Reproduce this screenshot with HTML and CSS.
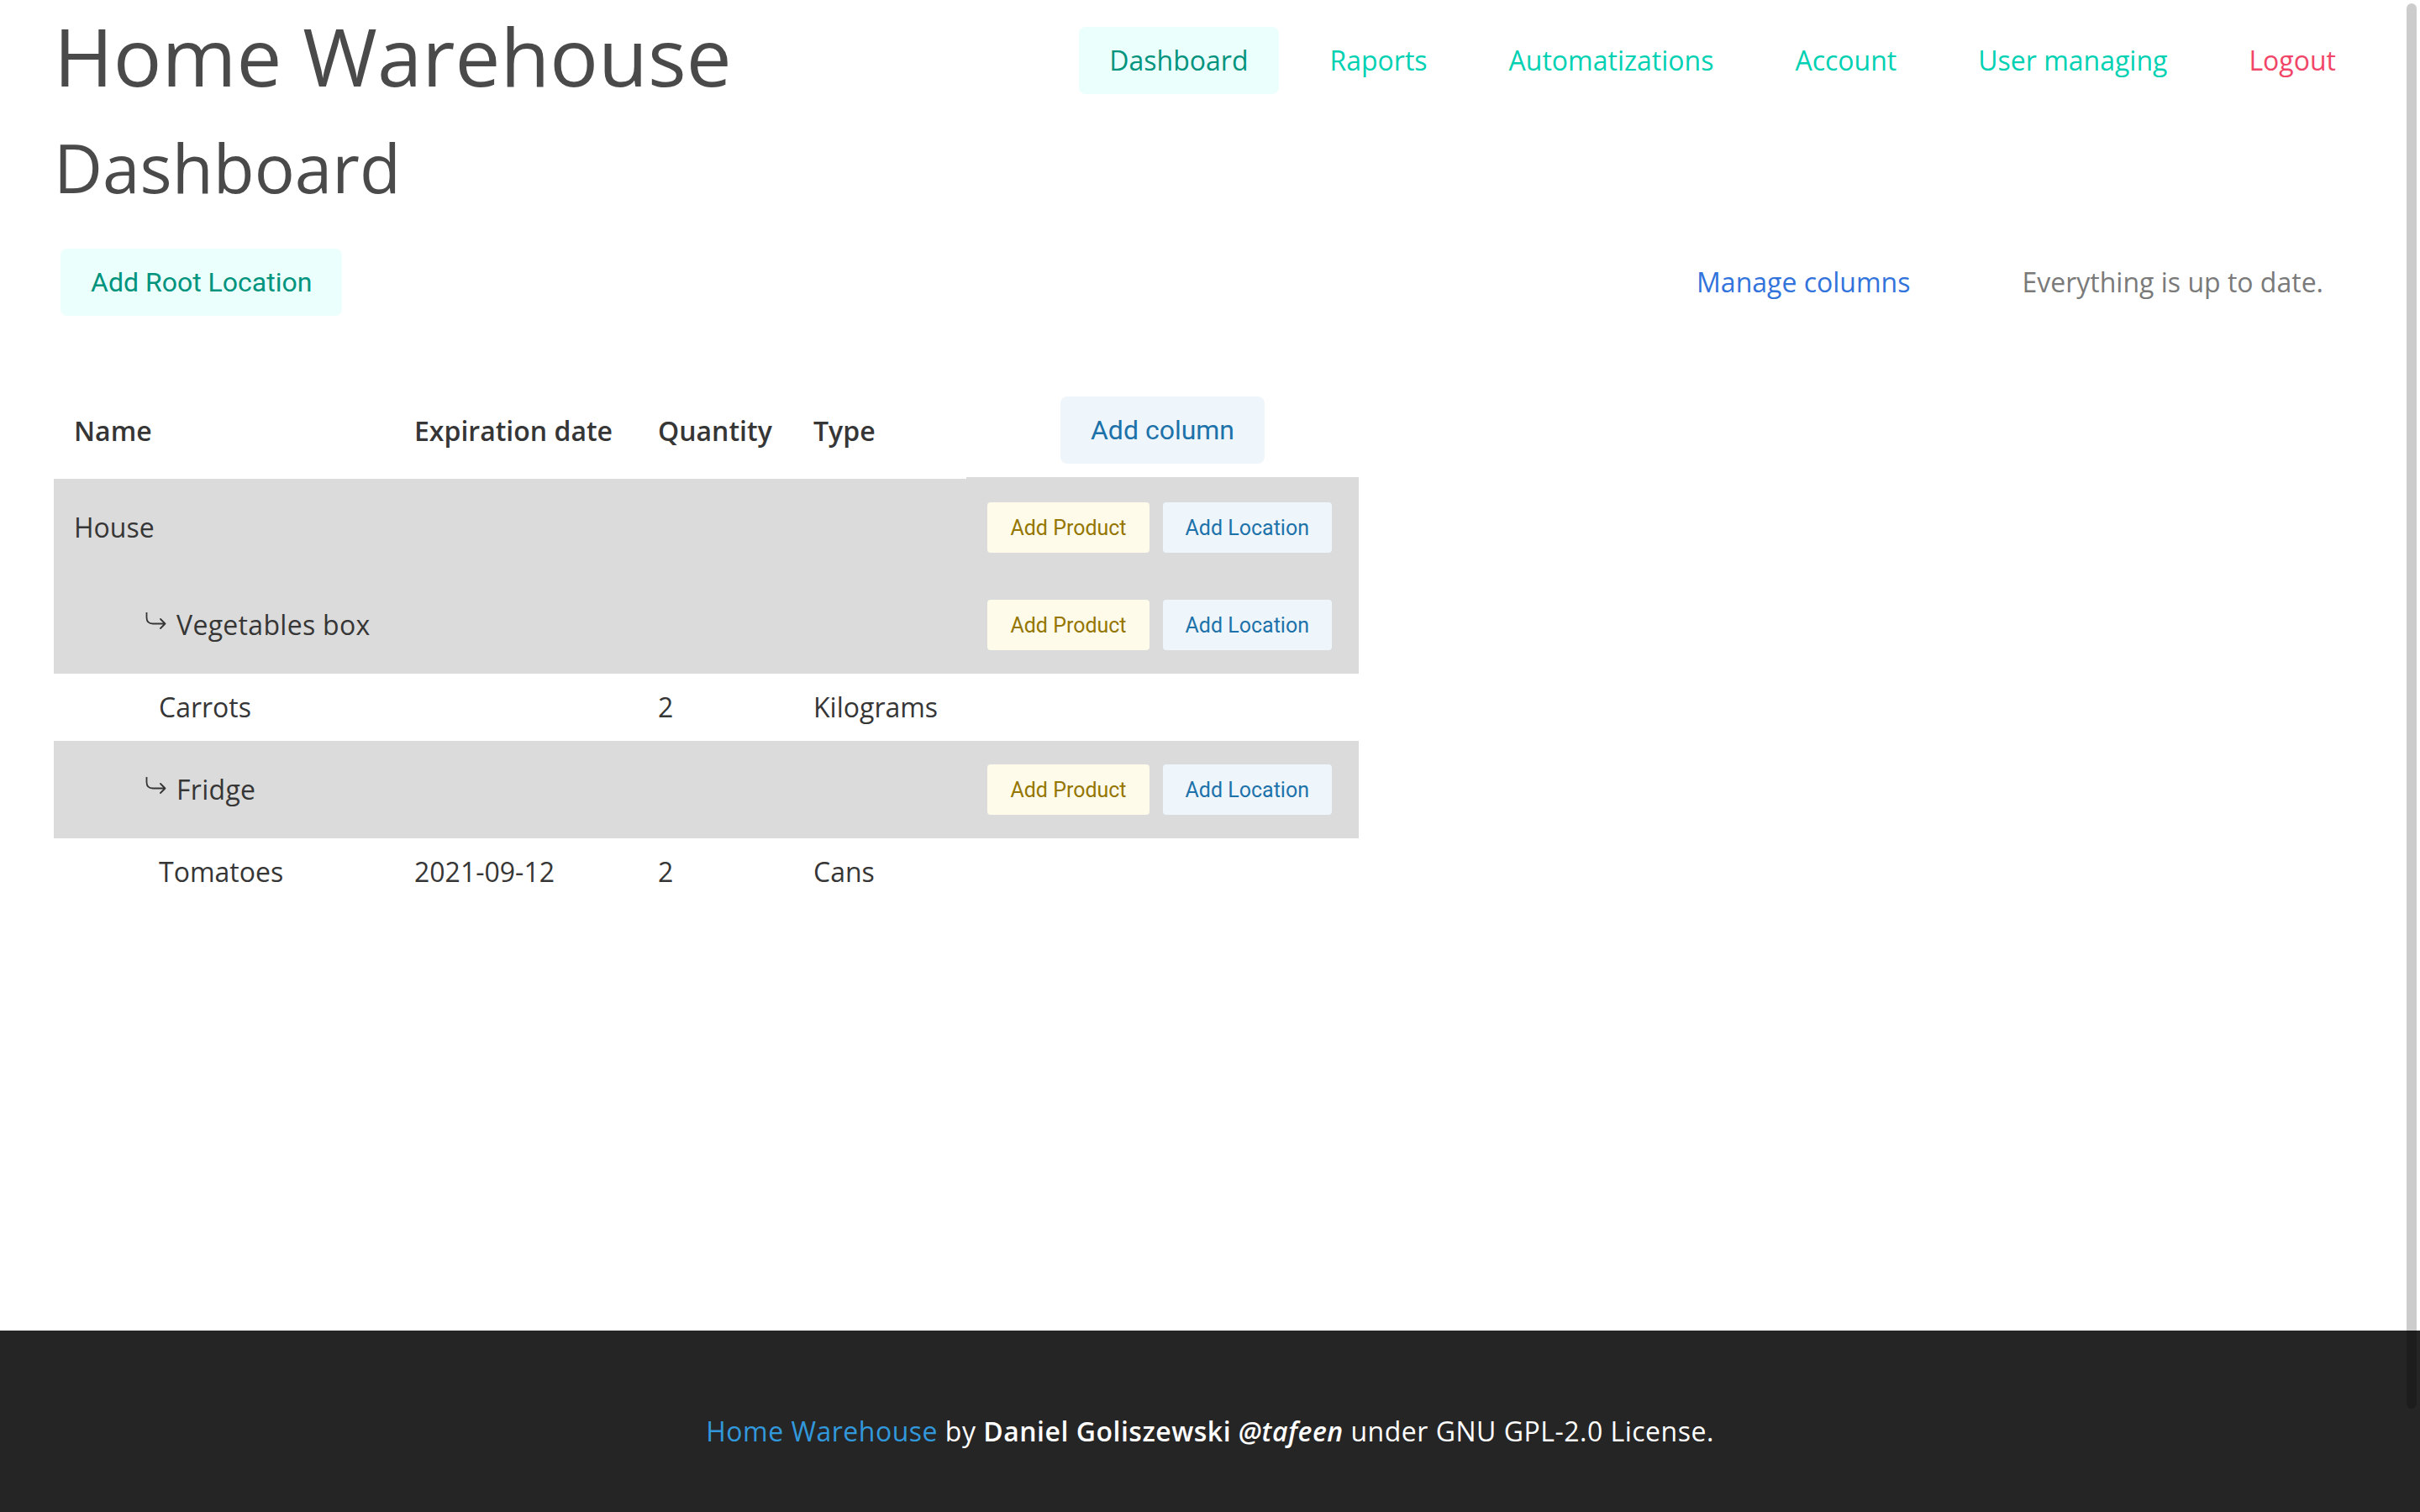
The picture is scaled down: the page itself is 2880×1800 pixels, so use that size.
FILE: index.html
```html
<!DOCTYPE html>
<html lang="en">
<head>
<meta charset="utf-8">
<title>Home Warehouse - Dashboard</title>
<link rel="stylesheet" href="styles.css">
</head>
<body>
<div class="page">
  <main class="container">
    <header class="topbar">
      <h1 class="site-title">Home Warehouse</h1>
      <nav class="nav">
        <a class="nav-item is-active" href="#">Dashboard</a>
        <a class="nav-item" href="#">Raports</a>
        <a class="nav-item" href="#">Automatizations</a>
        <a class="nav-item" href="#">Account</a>
        <a class="nav-item" href="#">User managing</a>
        <a class="nav-item is-danger" href="#">Logout</a>
      </nav>
    </header>

    <h2 class="page-title">Dashboard</h2>

    <div class="toolbar">
      <button class="btn btn-primary-light">Add Root Location</button>
      <div class="toolbar-right">
        <a class="manage-link" href="#">Manage columns</a>
        <span class="status">Everything is up to date.</span>
      </div>
    </div>

    <table class="tree-table">
      <colgroup>
        <col class="col-name">
        <col class="col-exp">
        <col class="col-qty">
        <col class="col-type">
        <col class="col-actions">
      </colgroup>
      <thead>
        <tr class="head-row">
          <th>Name</th>
          <th>Expiration date</th>
          <th>Quantity</th>
          <th>Type</th>
          <th class="th-actions"><button class="btn btn-info-light">Add column</button></th>
        </tr>
      </thead>
      <tbody>
        <tr class="loc-row">
          <td class="name-cell">House</td>
          <td></td>
          <td></td>
          <td></td>
          <td class="actions-cell">
            <div class="actions">
              <button class="btn-small btn-warning-light">Add Product</button>
              <button class="btn-small btn-info-light">Add Location</button>
            </div>
          </td>
        </tr>
        <tr class="loc-row">
          <td class="name-cell level-1">
            <div class="name-wrap">
              <svg class="branch" width="25" height="20" viewBox="0 0 25 20"><path d="M1.5 0.5 V6 Q1.5 13.5 9 13.5 H23.5 M18 8 L23.5 13.5 L18 19" fill="none" stroke="#363636" stroke-width="1.8" stroke-linecap="round" stroke-linejoin="round"/></svg>
              <span>Vegetables box</span>
            </div>
          </td>
          <td></td>
          <td></td>
          <td></td>
          <td class="actions-cell">
            <div class="actions">
              <button class="btn-small btn-warning-light">Add Product</button>
              <button class="btn-small btn-info-light">Add Location</button>
            </div>
          </td>
        </tr>
        <tr class="item-row">
          <td class="name-cell level-2">Carrots</td>
          <td></td>
          <td>2</td>
          <td>Kilograms</td>
          <td></td>
        </tr>
        <tr class="loc-row">
          <td class="name-cell level-1">
            <div class="name-wrap">
              <svg class="branch" width="25" height="20" viewBox="0 0 25 20"><path d="M1.5 0.5 V6 Q1.5 13.5 9 13.5 H23.5 M18 8 L23.5 13.5 L18 19" fill="none" stroke="#363636" stroke-width="1.8" stroke-linecap="round" stroke-linejoin="round"/></svg>
              <span>Fridge</span>
            </div>
          </td>
          <td></td>
          <td></td>
          <td></td>
          <td class="actions-cell">
            <div class="actions">
              <button class="btn-small btn-warning-light">Add Product</button>
              <button class="btn-small btn-info-light">Add Location</button>
            </div>
          </td>
        </tr>
        <tr class="item-row">
          <td class="name-cell level-2">Tomatoes</td>
          <td>2021-09-12</td>
          <td>2</td>
          <td>Cans</td>
          <td></td>
        </tr>
      </tbody>
    </table>
  </main>

  <footer class="footer">
    <p class="footer-text"><a class="footer-link" href="#">Home Warehouse</a> by <strong>Daniel Goliszewski</strong> <em class="handle">@tafeen</em> under GNU GPL-2.0 License.</p>
  </footer>
</div>
<div class="scroll-thumb"></div>
</body>
</html>
```

FILE: styles.css
```css
html, body {
  margin: 0;
  padding: 0;
  height: 1800px;
  overflow: hidden;
  background: #ffffff;
}

body {
  font-family: "Open Sans", "Noto Sans", sans-serif;
  font-size: 32px;
  line-height: 48px;
  color: #4a4a4a;
}

.page {
  display: flex;
  flex-direction: column;
  height: 1800px;
}

.container {
  flex: 1;
  padding: 0 64px;
}

/* ---------- header ---------- */
.topbar {
  display: flex;
  justify-content: space-between;
  align-items: flex-start;
  padding-top: 12px;
}

.site-title {
  margin: 0;
  font-size: 96px;
  line-height: 108px;
  font-weight: 400;
  color: #4a4a4a;
}

.nav {
  display: flex;
  gap: 25px;
  margin-top: 20px;
}

.nav-item {
  display: flex;
  align-items: center;
  height: 80px;
  padding: 0 36px;
  border-radius: 8px;
  color: #00d1b2;
  text-decoration: none;
  font-size: 32px;
}

.nav-item.is-active {
  background: #ebfffc;
  color: #00947e;
}

.nav-item.is-danger {
  color: #f14668;
}

.page-title {
  margin: 34px 0 0;
  font-size: 80px;
  line-height: 90px;
  font-weight: 400;
  color: #4a4a4a;
}

/* ---------- toolbar ---------- */
.toolbar {
  display: flex;
  align-items: center;
  justify-content: space-between;
  margin-top: 52px;
  padding: 0 51px 0 8px;
}

.toolbar-right {
  display: flex;
  align-items: center;
  gap: 133px;
}

.manage-link {
  color: #3273dc;
  text-decoration: none;
}

.status {
  color: #7a7a7a;
}

/* ---------- buttons ---------- */
.btn {
  display: inline-flex;
  align-items: center;
  justify-content: center;
  height: 80px;
  padding: 0 36px;
  border: none;
  border-radius: 8px;
  font-family: Roboto, "Liberation Sans", sans-serif;
  font-size: 32px;
  cursor: pointer;
}

.btn-small {
  display: inline-flex;
  align-items: center;
  justify-content: center;
  height: 60px;
  padding: 0 27px;
  border: none;
  border-radius: 4px;
  font-family: Roboto, "Liberation Sans", sans-serif;
  font-size: 25px;
  cursor: pointer;
}

.btn-primary-light {
  background: #ebfffc;
  color: #00947e;
}

.btn-info-light {
  background: #eef6fc;
  color: #1d72aa;
}

.btn-warning-light {
  background: #fffbeb;
  color: #947600;
}

/* ---------- table ---------- */
.tree-table {
  margin-top: 80px;
  width: 1553px;
  table-layout: fixed;
  border-collapse: separate;
  border-spacing: 0;
  color: #363636;
}

.col-name { width: 405px; }
.col-exp { width: 290px; }
.col-qty { width: 185px; }
.col-type { width: 206px; }
.col-actions { width: 467px; }

.tree-table th,
.tree-table td {
  padding: 0 24px;
  text-align: left;
  vertical-align: middle;
  white-space: nowrap;
}

.tree-table th {
  font-weight: 600;
  color: #363636;
}

.head-row {
  height: 114px;
}

.tree-table th.th-actions {
  text-align: center;
  padding: 0;
  border-bottom: 2px solid #dbdbdb;
}

.loc-row {
  height: 116px;
  background: #dbdbdb;
}

.item-row {
  height: 80px;
}

.name-cell.level-1 {
  padding-left: 109px;
}

.name-cell.level-2 {
  padding-left: 125px;
}

.name-wrap {
  display: flex;
  align-items: center;
  gap: 12px;
}

.name-wrap span {
  letter-spacing: 0.3px;
}

.branch {
  flex: none;
  margin-bottom: 10px;
}

.tree-table td.actions-cell {
  padding: 0 32px 0 0;
}

.actions {
  display: flex;
  justify-content: flex-end;
  gap: 16px;
}

/* ---------- footer ---------- */
.footer {
  height: 216px;
  box-sizing: border-box;
  padding-top: 96px;
  background: #252525;
  text-align: center;
  color: #ffffff;
}

.footer-text {
  margin: 0;
  letter-spacing: 0.5px;
}

.footer-link {
  color: #3298dc;
  text-decoration: none;
}

.footer strong {
  font-weight: 600;
}

.handle {
  font-style: italic;
  font-weight: 600;
}

/* overlay scrollbar thumb */
.scroll-thumb {
  position: fixed;
  top: 4px;
  right: 4px;
  width: 12px;
  height: 1673px;
  border-radius: 6px;
  background: rgba(0, 0, 0, 0.2);
}
```
